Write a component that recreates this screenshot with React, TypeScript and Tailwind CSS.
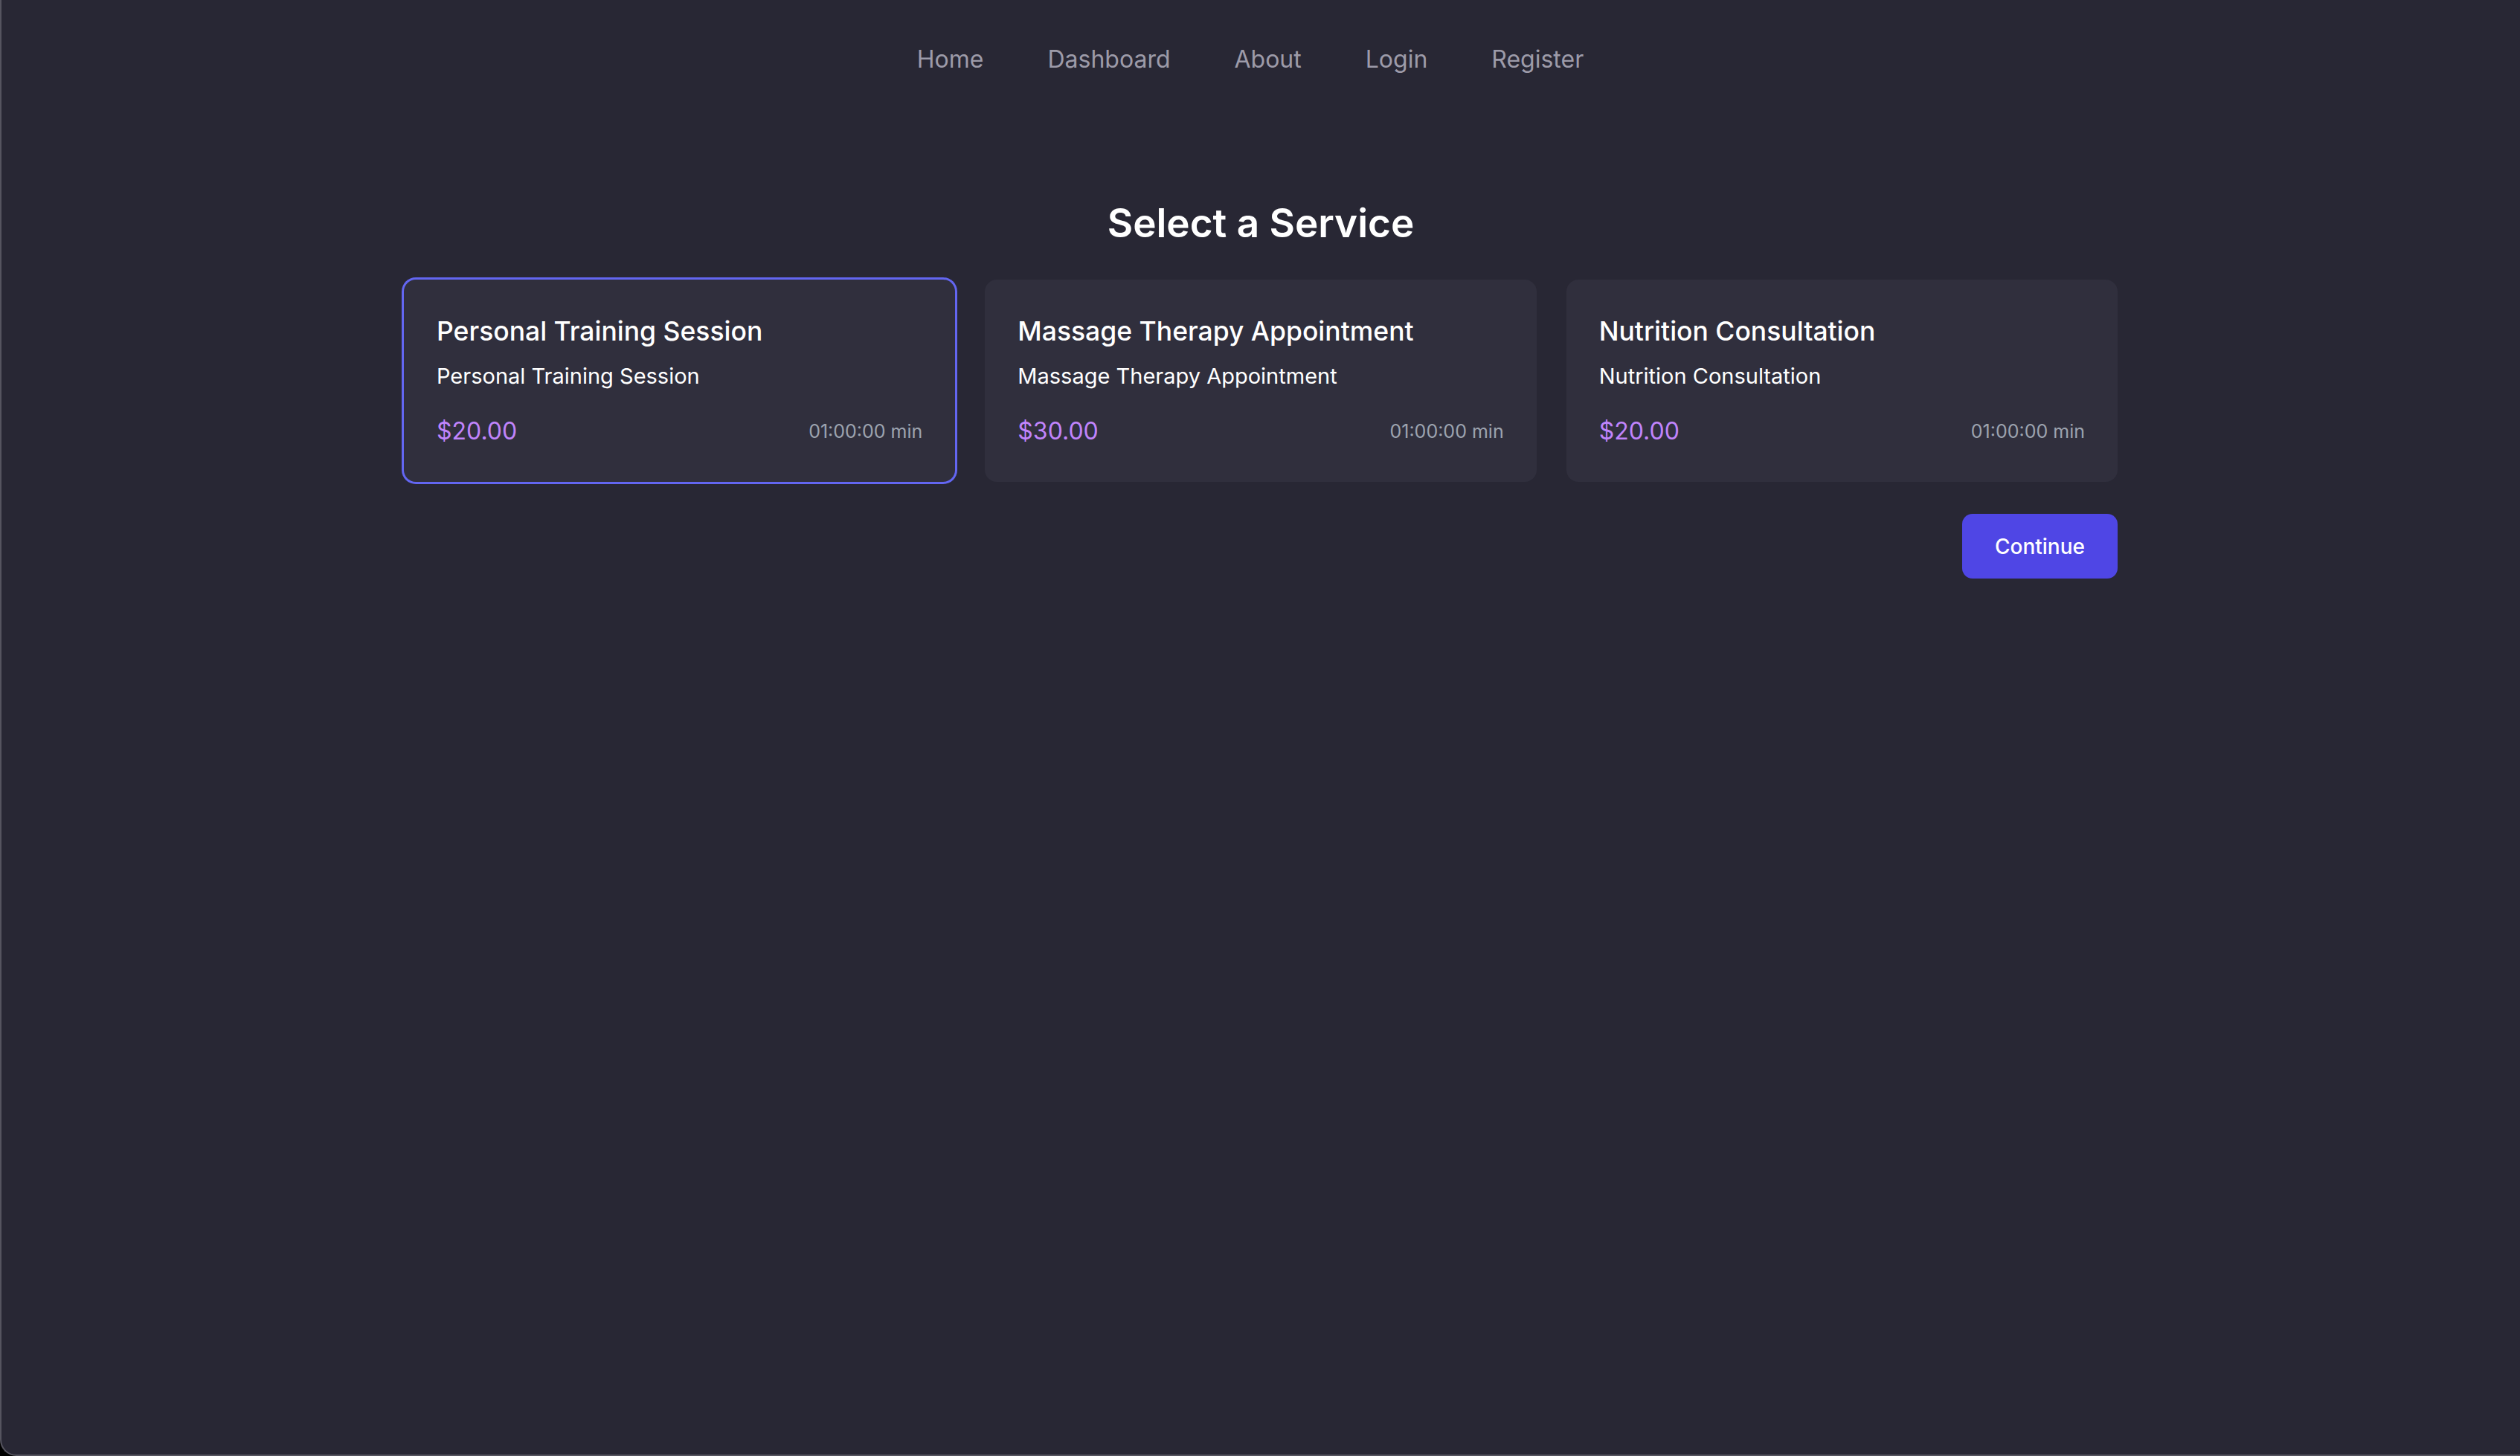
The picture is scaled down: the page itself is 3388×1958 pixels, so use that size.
import React, { useState } from 'react';

type Service = {
  id: number;
  name: string;
  description: string;
  price: string;
  duration: string;
};

const services: Service[] = [
  { id: 1, name: 'Personal Training Session', description: 'Personal Training Session', price: '$20.00', duration: '01:00:00 min' },
  { id: 2, name: 'Massage Therapy Appointment', description: 'Massage Therapy Appointment', price: '$30.00', duration: '01:00:00 min' },
  { id: 3, name: 'Nutrition Consultation', description: 'Nutrition Consultation', price: '$20.00', duration: '01:00:00 min' },
];

const navLinks = ['Home', 'Dashboard', 'About', 'Login', 'Register'];

const NavBar = () => (
  <nav className="h-[158px] pt-[2px] flex items-center justify-center gap-[86px] pr-[28px]">
    {navLinks.map((link) => (
      <a key={link} href="#" className="text-[32px] leading-[48px] text-[#9d9ba9] hover:text-white">
        {link}
      </a>
    ))}
  </nav>
);

const ServiceCard = ({ service, selected, onSelect }: { service: Service; selected: boolean; onSelect: () => void }) => (
  <button
    type="button"
    onClick={onSelect}
    className={`text-left bg-[#302f3d] rounded-[16px] px-11 pt-[46px] pb-11 ${selected ? 'ring-[3px] ring-[#6366f1]' : ''}`}
  >
    <h3 className="text-[35.5px] leading-[48px] font-medium text-white">{service.name}</h3>
    <p className="mt-3 text-[29px] leading-[48px] text-white">{service.description}</p>
    <div className="mt-[26px] flex items-center justify-between leading-[48px]">
      <span className="text-[32px] text-[#c084fc]">{service.price}</span>
      <span className="text-[25px] text-[#9ca3af]">{service.duration}</span>
    </div>
  </button>
);

export default function App() {
  const [selected, setSelected] = useState(1);

  return (
    <div className="h-[1958px] bg-black" style={{ fontFamily: 'Inter, "Noto Sans", sans-serif' }}>
      <div className="h-full bg-[#282734] border-l-2 border-b-2 border-[#55545f] rounded-bl-[22px]">
        <NavBar />
        <main className="max-w-[2304px] mx-auto pt-[106px]">
          <h1 className="text-center text-[53px] leading-[72px] font-semibold text-white">Select a Service</h1>
          <div className="mt-10 grid grid-cols-3 gap-10">
            {services.map((s) => (
              <ServiceCard key={s.id} service={s} selected={selected === s.id} onSelect={() => setSelected(s.id)} />
            ))}
          </div>
          <div className="mt-[43px] flex justify-end">
            <button type="button" className="h-[87px] px-[44px] rounded-[14px] bg-[#4f46e5] text-[28px] font-medium text-white">
              Continue
            </button>
          </div>
        </main>
      </div>
    </div>
  );
}
